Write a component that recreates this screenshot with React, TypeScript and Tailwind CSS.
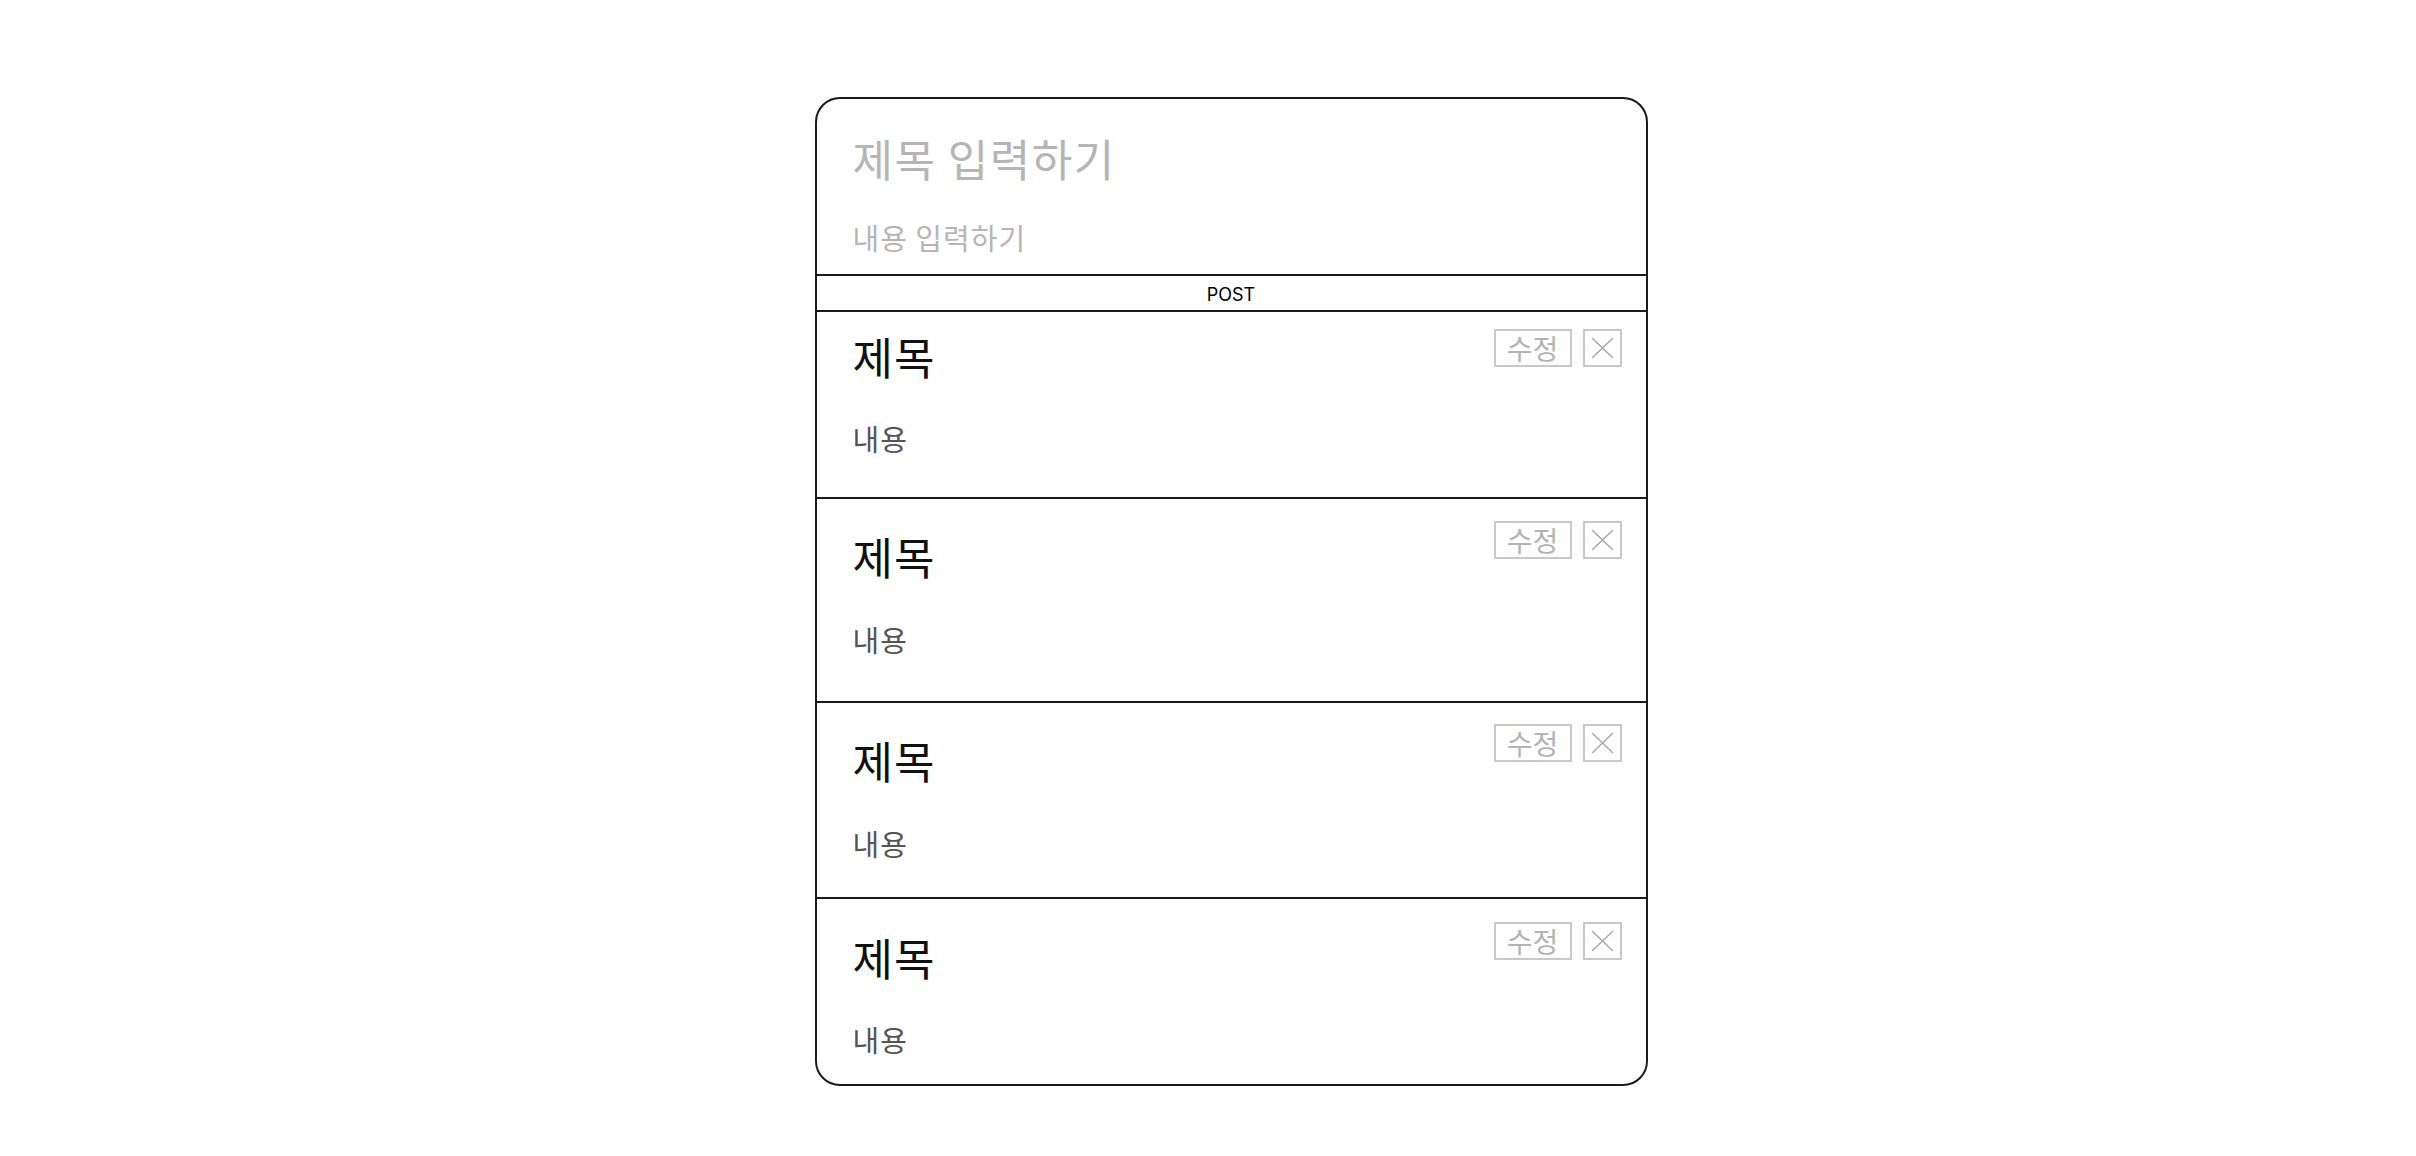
import React from "react";

type Item = { box: string; gap: string; btn: string; last?: boolean };

const items: Item[] = [
  { box: "pt-[20px] pb-[43px] border-b-2 border-[#1a1a1a]", gap: "mt-[42px]", btn: "-mt-[3px]" },
  { box: "pt-[33px] pb-[46px] border-b-2 border-[#1a1a1a]", gap: "mt-[43px]", btn: "-mt-[11px]" },
  { box: "pt-[33px] pb-[38px] border-b-2 border-[#1a1a1a]", gap: "mt-[43px]", btn: "-mt-[12px]" },
  { box: "pt-[34px] pb-[29px]", gap: "mt-[42px]", btn: "-mt-[11px]", last: true },
];

const ko = "font-['Noto_Sans_CJK_KR','Noto_Sans',sans-serif]";

function Post({ it }: { it: Item }) {
  return (
    <div className={`flex justify-between pl-[36px] pr-[24px] ${it.box}`}>
      <div className={`flex flex-col ${ko}`}>
        <div className="text-[44px] leading-[48px] tracking-[1px] text-[#111]">제목</div>
        <div className={`text-[29px] leading-[32px] tracking-[1px] text-[#555] ${it.gap}`}>내용</div>
      </div>
      <div className={`flex gap-[11px] self-start ${it.btn}`}>
        <button
          className={`w-[78px] h-[38px] border-2 border-[#c8c8c8] bg-white flex items-center justify-center text-[28px] leading-none text-[#b3b3b3] ${ko}`}
        >
          수정
        </button>
        <button className="w-[39px] h-[38px] border-2 border-[#c8c8c8] bg-white flex items-center justify-center">
          <svg width="23" height="22" viewBox="0 0 23 22">
            <path d="M1 1 L22 21 M22 1 L1 21" stroke="#a8a8a8" strokeWidth="1.5" fill="none" />
          </svg>
        </button>
      </div>
    </div>
  );
}

export default function App() {
  return (
    <div className="w-full min-h-[1156px] bg-white flex justify-center pt-[97px] pl-[46px]">
      <div className="w-[833px] h-[989px] border-2 border-[#1a1a1a] rounded-[25px] overflow-hidden bg-white flex flex-col">
        <div className={`pl-[36px] pt-[35px] pb-[21px] border-b-2 border-[#1a1a1a] ${ko}`}>
          <div className="text-[44px] leading-[48px] tracking-[1.5px] text-[#b5b5b5]">제목 입력하기</div>
          <div className="text-[29px] leading-[32px] tracking-[1px] text-[#b5b5b5] mt-[39px]">내용 입력하기</div>
        </div>
        <div className="h-[36px] border-b-2 border-[#1a1a1a] flex items-center justify-center pt-[2px] text-[18px] text-black font-['Inter','Liberation_Sans',sans-serif]">
          POST
        </div>
        {items.map((it, i) => (
          <Post key={i} it={it} />
        ))}
      </div>
    </div>
  );
}
